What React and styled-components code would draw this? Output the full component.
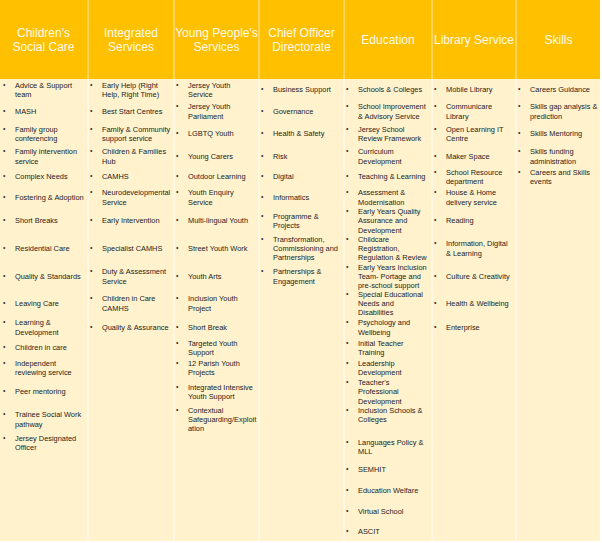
import React from 'react';
import styled, { createGlobalStyle } from 'styled-components';

// shared row heights (px) — every column lines its entries up on these
const ROWS = [22, 21, 24, 21, 20, 21, 26, 29, 27, 27, 21, 20, 20, 28, 27, 20];

const COLUMNS = [
  {
    title: "Children's Social Care",
    width: 87,
    items: [
      'Advice & Support\nteam', 'MASH', 'Family group\nconferencing', 'Family intervention\nservice',
      'Complex Needs', 'Fostering & Adoption', 'Short Breaks', 'Residential Care',
      'Quality & Standards', 'Leaving Care', 'Learning &\nDevelopment', 'Children in care',
      'Independent\nreviewing service', 'Peer mentoring', 'Trainee Social Work\npathway',
      'Jersey Designated\nOfficer',
    ],
  },
  {
    title: 'Integrated Services',
    width: 86,
    items: [
      'Early Help (Right\nHelp, Right Time)', 'Best Start Centres', 'Family & Community\nsupport service',
      'Children & Families\nHub', 'CAMHS', 'Neurodevelopmental\nService', 'Early Intervention',
      'Specialist CAMHS', 'Duty & Assessment\nService', 'Children in Care\nCAMHS', 'Quality & Assurance',
    ],
  },
  {
    title: "Young People's Services",
    width: 85,
    items: [
      'Jersey Youth\nService', 'Jersey Youth\nParliament', 'LGBTQ Youth', 'Young Carers',
      'Outdoor Learning', 'Youth Enquiry\nService', 'Multi-lingual Youth', 'Street Youth Work',
      'Youth Arts', 'Inclusion Youth\nProject', 'Short Break', 'Targeted Youth\nSupport',
      '12 Parish Youth\nProjects', 'Integrated Intensive\nYouth Support',
      'Contextual\nSafeguarding/Exploit\nation',
    ],
  },
  {
    title: 'Chief Officer Directorate',
    width: 85,
    items: [
      'Business Support', 'Governance', 'Health & Safety', 'Risk', 'Digital', 'Informatics',
      'Programme &\nProjects', 'Transformation,\nCommissioning and\nPartnerships',
      'Partnerships &\nEngagement',
    ],
  },
  {
    title: 'Education',
    width: 88,
    items: [
      'Schools & Colleges', 'School Improvement\n& Advisory Service', 'Jersey School\nReview Framework',
      'Curriculum\nDevelopment', 'Teaching & Learning', 'Assessment &\nModernisation',
      'Early Years Quality\nAssurance and\nDevelopment', 'Childcare\nRegistration,\nRegulation & Review',
      'Early Years Inclusion\nTeam- Portage and\npre-school support',
      'Special Educational\nNeeds and\nDisabilities', 'Psychology and\nWellbeing',
      'Initial Teacher\nTraining', 'Leadership\nDevelopment', "Teacher's\nProfessional\nDevelopment",
      { text: 'Inclusion Schools &\nColleges', h: 18 },
      { text: 'Languages Policy &\nMLL', h: 26, top: 10 },
      { text: 'SEMHIT', h: 20 },
      { text: 'Education Welfare', h: 22 },
      { text: 'Virtual School', h: 20 },
      { text: 'ASCIT', h: 20 },
    ],
  },
  {
    title: 'Library Service',
    width: 84,
    items: [
      'Mobile Library', 'Communicare\nLibrary', 'Open Learning IT\nCentre', 'Maker Space',
      'School Resource\ndepartment', 'House & Home\ndelivery service', 'Reading',
      'Information, Digital\n& Learning', 'Culture & Creativity', 'Health & Wellbeing', 'Enterprise',
    ],
  },
  {
    title: 'Skills',
    width: 85,
    items: [
      'Careers Guidance', 'Skills gap analysis &\nprediction', 'Skills Mentoring',
      'Skills funding\nadministration', 'Careers and Skills\nevents',
    ],
  },
];

const GlobalStyle = createGlobalStyle`
  html, body {
    margin: 0;
    padding: 0;
    background: #ffffff;
  }
  body {
    font-family: "Liberation Sans", Arial, sans-serif;
  }
`;

const Table = styled.div`
  display: grid;
  grid-template-columns: ${props => props.$cols};
  grid-template-rows: 79px 462px;
  width: 600px;
`;

const HeaderCell = styled.div`
  display: flex;
  align-items: center;
  justify-content: center;
  background: #ffc000;
  color: #fffaea;
  font-size: 12px;
  line-height: 14px;
  text-align: center;
  border-left: ${props => props.$first ? 'none' : '2px solid #ffd45a'};
`;

const BodyCell = styled.ul`
  margin: 0;
  padding: 0;
  list-style: none;
  display: flex;
  flex-direction: column;
  background: #fff2cc;
  border-left: ${props => props.$first ? 'none' : '2px solid #fff8e4'};
  overflow: hidden;
`;

const Entry = styled.li`
  flex: 0 0 auto;
  height: ${props => props.$h}px;
  margin-top: ${props => props.$top || 0}px;
  display: grid;
  grid-template-columns: 12px auto;
  align-content: center;
  align-items: start;
  padding-left: ${props => props.$first ? 3 : 1}px;
  font-size: 7.4px;
  line-height: 9.2px;
  color: #1c1c1c;
`;

const Bullet = styled.span`
  font-size: 7px;
  line-height: 8.6px;
  color: #333;
`;

const Label = styled.span`
  white-space: pre;
`;

function Column({ column, first }) {
  return (
    <BodyCell $first={first}>
      {column.items.map((item, index) => {
        const entry = typeof item === 'string' ? { text: item } : item;
        return (
          <Entry key={entry.text} $first={first} $h={entry.h || ROWS[index]} $top={entry.top}>
            <Bullet>•</Bullet>
            <Label>{entry.text}</Label>
          </Entry>
        );
      })}
    </BodyCell>
  );
}

export default function App() {
  const cols = COLUMNS.map(c => `${c.width}px`).join(' ');

  return (
    <>
      <GlobalStyle />
      <Table $cols={cols}>
        {COLUMNS.map((column, i) => (
          <HeaderCell key={column.title} $first={i === 0}>{column.title}</HeaderCell>
        ))}
        {COLUMNS.map((column, i) => (
          <Column key={column.title} column={column} first={i === 0} />
        ))}
      </Table>
    </>
  );
}
